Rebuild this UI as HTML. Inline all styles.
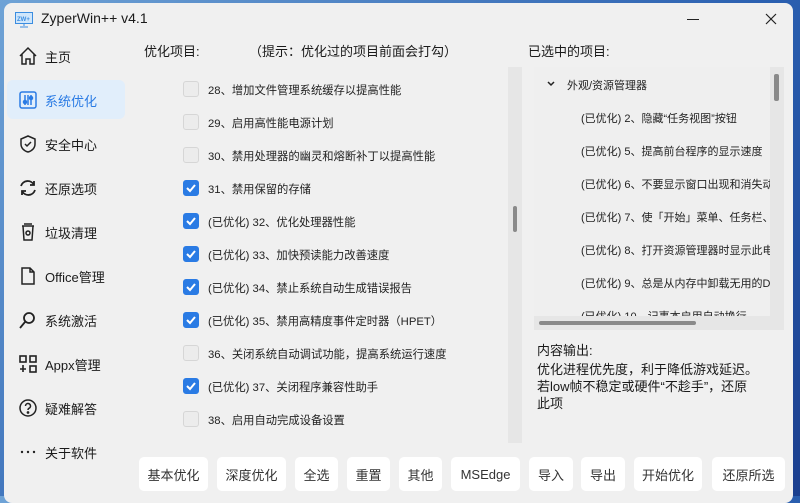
<!DOCTYPE html>
<html><head><meta charset="utf-8"><style>
*{margin:0;padding:0;box-sizing:border-box}
body{width:800px;height:496px;overflow:hidden;background:linear-gradient(135deg,#6fa3d6,#2a5fb0 60%,#1b3f8f);font-family:"Liberation Sans","Noto Sans CJK SC",sans-serif;color:#1a1a1a;position:relative}
.win{position:absolute;left:4px;top:3px;width:789px;height:500px;background:#f0f0f0;border-radius:8px;overflow:hidden}
.a{position:absolute}
.t{font-size:11px;color:#222;white-space:nowrap}
.nav{position:absolute;left:0;width:120px;height:40px;display:flex;align-items:center;font-size:13px}
.nav svg{position:absolute;left:14px}
.nav span{position:absolute;left:41px}
.cb{position:absolute;left:179px;width:16px;height:16px;border:1px solid #d6d6d6;border-radius:3px;background:#ececec}
.cb.on{background:#2a7be4;border-color:#2a7be4}
.row{position:absolute;left:204px;font-size:11.3px;color:#222;white-space:nowrap}
.btn{position:absolute;top:454px;height:34px;background:#fff;border-radius:5px;font-size:13px;color:#333;display:flex;align-items:center;justify-content:center}
.r{position:absolute;left:577px;font-size:11px;color:#222;white-space:nowrap}
</style></head><body>
<div class="win">
<svg class="a" style="left:11px;top:9px" width="18" height="16" viewBox="0 0 18 16"><rect x="0.5" y="0.5" width="17" height="11" fill="#cfe6fb" stroke="#3b8de0"/><text x="2" y="9" font-size="6" fill="#3b8de0" font-family="Liberation Sans" font-weight="bold">ZW+</text><path d="M9 12v2M5 15h8" stroke="#3b8de0"/></svg>
<div class="a" style="left:37px;top:7px;font-size:14px">ZyperWin++ v4.1</div>
<div class="a" style="left:683px;top:16px;width:12px;height:1px;background:#222"></div>
<svg class="a" style="left:761px;top:10px" width="12" height="12"><path d="M1 1L11 11M11 1L1 11" stroke="#222" stroke-width="1.2"/></svg>

<div class="a" style="left:3px;top:77px;width:118px;height:39px;background:#e1eefb;border-radius:6px"></div>
<div class="nav" style="top:33px"><svg width="20" height="20" viewBox="0 0 20 20" fill="none" stroke="#222" stroke-width="1.5"><path d="M2 10L10 2l8 8M4 8v10h4v-5h4v5h4V8"/></svg><span>主页</span></div>
<div class="nav" style="top:77px;color:#2a7be4"><svg width="20" height="20" viewBox="0 0 20 20" fill="none" stroke="#2a7be4" stroke-width="1.5"><rect x="2" y="2" width="16" height="16" rx="2"/><path d="M7 5v10M10 5v10M13 5v10"/><circle cx="7" cy="12" r="1.5" fill="#2a7be4"/><circle cx="13" cy="8" r="1.5" fill="#2a7be4"/></svg><span>系统优化</span></div>
<div class="nav" style="top:121px"><svg width="20" height="20" viewBox="0 0 20 20" fill="none" stroke="#222" stroke-width="1.5"><path d="M10 2l7 3v5c0 4-3 7-7 8-4-1-7-4-7-8V5z"/><path d="M7 10l2 2 4-4"/></svg><span>安全中心</span></div>
<div class="nav" style="top:165px"><svg width="20" height="20" viewBox="0 0 20 20" fill="none" stroke="#222" stroke-width="1.8"><path d="M16 7A7 7 0 0 0 3 8M4 13a7 7 0 0 0 13-1"/><path d="M16 3v4h-4M4 17v-4h4"/></svg><span>还原选项</span></div>
<div class="nav" style="top:209px"><svg width="20" height="20" viewBox="0 0 20 20" fill="none" stroke="#222" stroke-width="1.5"><path d="M4 4h12M5 4l1 14h8l1-14M6 2h8"/><circle cx="10" cy="11" r="2"/></svg><span>垃圾清理</span></div>
<div class="nav" style="top:253px"><svg width="20" height="20" viewBox="0 0 20 20" fill="none" stroke="#222" stroke-width="1.5"><path d="M4 2h8l4 4v12H4zM12 2v4h4"/></svg><span>Office管理</span></div>
<div class="nav" style="top:297px"><svg width="20" height="20" viewBox="0 0 20 20" fill="none" stroke="#222" stroke-width="1.8"><circle cx="11" cy="8" r="5"/><path d="M7 12l-5 6"/></svg><span>系统激活</span></div>
<div class="nav" style="top:341px"><svg width="20" height="20" viewBox="0 0 20 20" fill="none" stroke="#222" stroke-width="1.6"><rect x="2" y="2" width="6" height="6"/><rect x="12" y="2" width="6" height="6"/><rect x="12" y="12" width="6" height="6"/><path d="M5 11v7M2 15h6"/></svg><span>Appx管理</span></div>
<div class="nav" style="top:385px"><svg width="20" height="20" viewBox="0 0 20 20" fill="none" stroke="#222" stroke-width="1.5"><circle cx="10" cy="10" r="8"/><path d="M7.5 8a2.5 2.5 0 1 1 3.5 2.3c-.8.4-1 1-1 1.7"/><circle cx="10" cy="14.5" r=".6" fill="#222"/></svg><span>疑难解答</span></div>
<div class="nav" style="top:429px"><svg width="20" height="20" viewBox="0 0 20 20" fill="#222"><circle cx="4" cy="10" r="1.2"/><circle cx="10" cy="10" r="1.2"/><circle cx="16" cy="10" r="1.2"/></svg><span>关于软件</span></div>

<div class="a" style="left:140px;top:38px;font-size:13px">优化项目:</div>
<div class="a" style="left:245px;top:38px;font-size:13px">（提示：优化过的项目前面会打勾）</div>
<div class="a" style="left:524px;top:38px;font-size:13px">已选中的项目:</div>

<div class="a" style="left:504px;top:64px;width:14px;height:376px;background:#e6e6e6"></div>
<div class="a" style="left:509px;top:203px;width:4px;height:26px;background:#8a8a8a;border-radius:2px"></div>

<div class="cb" style="top:78px"></div><div class="row" style="top:79px">28、增加文件管理系统缓存以提高性能</div>
<div class="cb" style="top:111px"></div><div class="row" style="top:112px">29、启用高性能电源计划</div>
<div class="cb" style="top:144px"></div><div class="row" style="top:145px">30、禁用处理器的幽灵和熔断补丁以提高性能</div>
<div class="cb on" style="top:177px"><svg width="14" height="14"><path d="M3 7l3 3 5-6" stroke="#fff" stroke-width="2" fill="none"/></svg></div><div class="row" style="top:178px">31、禁用保留的存储</div>
<div class="cb on" style="top:210px"><svg width="14" height="14"><path d="M3 7l3 3 5-6" stroke="#fff" stroke-width="2" fill="none"/></svg></div><div class="row" style="top:211px">(已优化) 32、优化处理器性能</div>
<div class="cb on" style="top:243px"><svg width="14" height="14"><path d="M3 7l3 3 5-6" stroke="#fff" stroke-width="2" fill="none"/></svg></div><div class="row" style="top:244px">(已优化) 33、加快预读能力改善速度</div>
<div class="cb on" style="top:276px"><svg width="14" height="14"><path d="M3 7l3 3 5-6" stroke="#fff" stroke-width="2" fill="none"/></svg></div><div class="row" style="top:277px">(已优化) 34、禁止系统自动生成错误报告</div>
<div class="cb on" style="top:309px"><svg width="14" height="14"><path d="M3 7l3 3 5-6" stroke="#fff" stroke-width="2" fill="none"/></svg></div><div class="row" style="top:310px">(已优化) 35、禁用高精度事件定时器（HPET）</div>
<div class="cb" style="top:342px"></div><div class="row" style="top:343px">36、关闭系统自动调试功能，提高系统运行速度</div>
<div class="cb on" style="top:375px"><svg width="14" height="14"><path d="M3 7l3 3 5-6" stroke="#fff" stroke-width="2" fill="none"/></svg></div><div class="row" style="top:376px">(已优化) 37、关闭程序兼容性助手</div>
<div class="cb" style="top:408px"></div><div class="row" style="top:409px">38、启用自动完成设备设置</div>

<div class="a" style="left:530px;top:64px;width:250px;height:263px;background:#efefef;overflow:hidden">
<div class="a" style="left:236px;top:0;width:14px;height:263px;background:#e6e6e6"></div>
<div class="a" style="left:240px;top:7px;width:5px;height:27px;background:#8a8a8a;border-radius:2px"></div>
</div>
<div class="r" style="top:107px">(已优化) 2、隐藏“任务视图”按钮</div>
<div class="r" style="top:140px">(已优化) 5、提高前台程序的显示速度</div>
<div class="r" style="top:173px;width:189px;overflow:hidden">(已优化) 6、不要显示窗口出现和消失动画</div>
<div class="r" style="top:206px;width:189px;overflow:hidden">(已优化) 7、使「开始」菜单、任务栏、操作中心</div>
<div class="r" style="top:239px;width:189px;overflow:hidden">(已优化) 8、打开资源管理器时显示此电脑</div>
<div class="r" style="top:272px;width:189px;overflow:hidden">(已优化) 9、总是从内存中卸载无用的DLL</div>
<div class="r" style="top:305px;width:189px;overflow:hidden">(已优化) 10、记事本启用自动换行</div>
<div class="a" style="left:530px;top:313px;width:236px;height:14px;background:#e6e6e6"></div>
<div class="a" style="left:535px;top:318px;width:157px;height:4px;background:#8a8a8a;border-radius:2px"></div>
<svg class="a" style="left:543px;top:78px" width="8" height="6"><path d="M1 1l3 3 3-3" stroke="#222" stroke-width="1.5" fill="none"/></svg>
<div class="a t" style="left:563px;top:74px">外观/资源管理器</div>

<div class="a" style="left:533px;top:337px;font-size:13px">内容输出:</div>
<div class="a" style="left:533px;top:358px;font-size:13px;line-height:17px;white-space:nowrap">优化进程优先度，利于降低游戏延迟。<br>若low帧不稳定或硬件“不趁手”，还原<br>此项</div>

<div class="btn" style="left:135px;width:69px">基本优化</div>
<div class="btn" style="left:213px;width:69px">深度优化</div>
<div class="btn" style="left:291px;width:43px">全选</div>
<div class="btn" style="left:343px;width:43px">重置</div>
<div class="btn" style="left:395px;width:43px">其他</div>
<div class="btn" style="left:447px;width:69px">MSEdge</div>
<div class="btn" style="left:525px;width:44px">导入</div>
<div class="btn" style="left:577px;width:44px">导出</div>
<div class="btn" style="left:630px;width:68px">开始优化</div>
<div class="btn" style="left:708px;width:73px">还原所选</div>
</div>
</body></html>
